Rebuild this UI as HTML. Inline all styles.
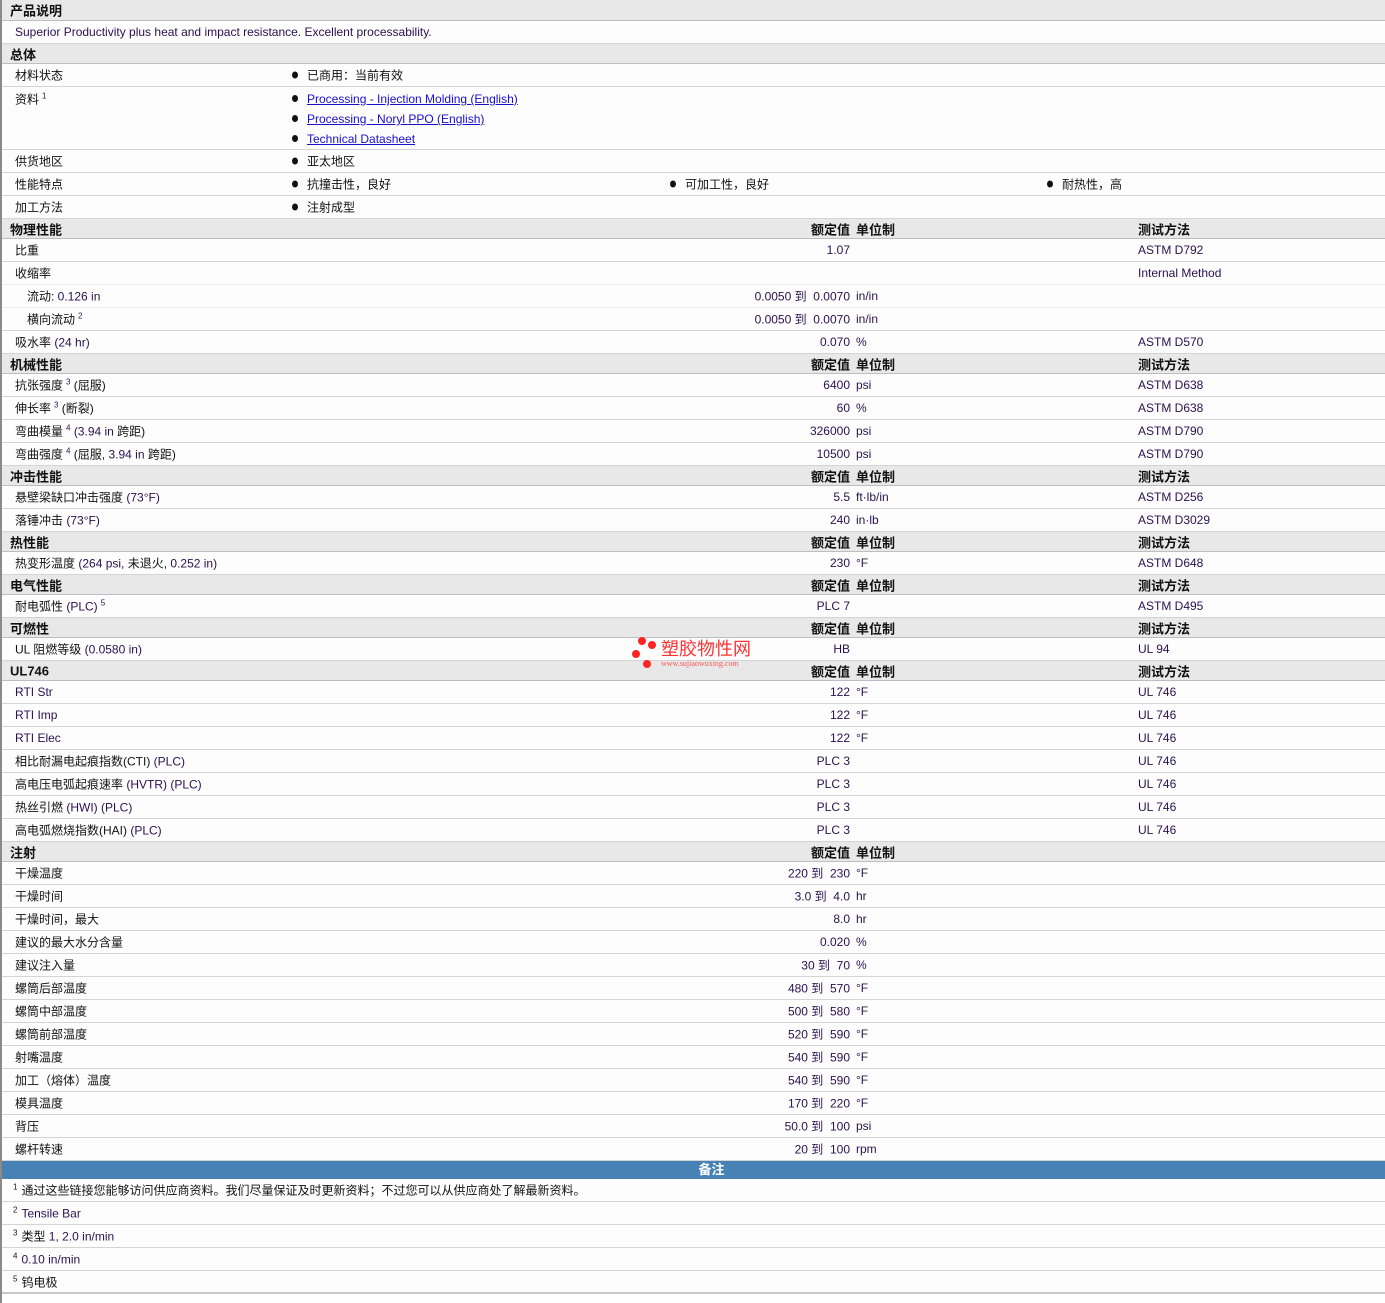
<!DOCTYPE html>
<html><head><meta charset="utf-8"><style>
*{box-sizing:border-box;margin:0;padding:0}
body{width:1385px;height:1303px;background:#fff;font-family:"Liberation Sans","Noto Sans CJK SC",sans-serif;font-size:12px;color:#111;position:relative;overflow:hidden;border-left:2px solid #8a8a8a}
.row{position:relative;height:23px;border-bottom:1px solid #d4d4d4;background:#fdfdfd}
.h{height:20px;background:#e8e8e8;border-bottom:1px solid #bdbdc8;font-weight:bold;font-size:13px}
.row span{position:absolute;top:50%;transform:translateY(-50%);white-space:nowrap}
.h .l{left:8px}
.l{left:13px}
.i{left:25px}
.v{right:535px;text-align:right;color:#2a1050}
.u{left:854px;color:#2a1050}
.t{left:1136px;color:#2a1050}
.hv{right:535px}
.hu{left:854px}
.ht{left:1136px}
.b{left:290px}
.b::before{content:"";display:inline-block;width:6px;height:7px;border-radius:50%;background:#111;margin-right:9px;vertical-align:1px}
.e{color:#2a1050}
sup{font-size:8px;vertical-align:5px;margin-left:3px}
a{color:#1a0dcc;text-decoration:underline}
.note{background:#4682b4;height:18px;color:#fff;font-weight:bold;font-size:13px;text-align:center;line-height:18px;padding-left:36px}
.nr sup{margin:0 4px 0 0}
</style></head><body>
<div class="row h" style="height:21px"><span class="l">产品说明</span></div>
<div class="row"><span class="l e">Superior Productivity plus heat and impact resistance. Excellent processability.</span></div>
<div class="row h"><span class="l">总体</span></div>
<div class="row"><span class="l">材料状态</span><span class="b">已商用：当前有效</span></div>
<div class="row" style="height:63px"><span class="l" style="top:12px">资料<sup class="e">1</sup></span>
<span class="b" style="top:12px"><a>Processing - Injection Molding (English)</a></span>
<span class="b" style="top:32px"><a>Processing - Noryl PPO (English)</a></span>
<span class="b" style="top:52px"><a>Technical Datasheet</a></span></div>
<div class="row"><span class="l">供货地区</span><span class="b">亚太地区</span></div>
<div class="row"><span class="l">性能特点</span><span class="b">抗撞击性，良好</span><span class="b" style="left:668px">可加工性，良好</span><span class="b" style="left:1045px">耐热性，高</span></div>
<div class="row"><span class="l">加工方法</span><span class="b">注射成型</span></div>
<div class="row h"><span class="l">物理性能</span><span class="hv">额定值</span><span class="hu">单位制</span><span class="ht">测试方法</span></div>
<div class="row"><span class="l">比重</span><span class="v">1.07</span><span class="t">ASTM D792</span></div>
<div class="row" style="border-color:#eee"><span class="l">收缩率</span><span class="t">Internal Method</span></div>
<div class="row" style="border-color:#eee"><span class="i">流动: <span class="e" style="position:static">0.126 in</span></span><span class="v">0.0050 到&nbsp; 0.0070</span><span class="u">in/in</span></div>
<div class="row"><span class="i">横向流动<sup class="e">2</sup></span><span class="v">0.0050 到&nbsp; 0.0070</span><span class="u">in/in</span></div>
<div class="row"><span class="l">吸水率 <span class="e" style="position:static">(24 hr)</span></span><span class="v">0.070</span><span class="u">%</span><span class="t">ASTM D570</span></div>
<div class="row h"><span class="l">机械性能</span><span class="hv">额定值</span><span class="hu">单位制</span><span class="ht">测试方法</span></div>
<div class="row"><span class="l">抗张强度<sup class="e">3</sup> (屈服)</span><span class="v">6400</span><span class="u">psi</span><span class="t">ASTM D638</span></div>
<div class="row"><span class="l">伸长率<sup class="e">3</sup> (断裂)</span><span class="v">60</span><span class="u">%</span><span class="t">ASTM D638</span></div>
<div class="row"><span class="l">弯曲模量<sup class="e">4</sup> <span class="e" style="position:static">(3.94 in</span> 跨距)</span><span class="v">326000</span><span class="u">psi</span><span class="t">ASTM D790</span></div>
<div class="row"><span class="l">弯曲强度<sup class="e">4</sup> (屈服, <span class="e" style="position:static">3.94 in</span> 跨距)</span><span class="v">10500</span><span class="u">psi</span><span class="t">ASTM D790</span></div>
<div class="row h"><span class="l">冲击性能</span><span class="hv">额定值</span><span class="hu">单位制</span><span class="ht">测试方法</span></div>
<div class="row"><span class="l">悬壁梁缺口冲击强度 <span class="e" style="position:static">(73°F)</span></span><span class="v">5.5</span><span class="u">ft·lb/in</span><span class="t">ASTM D256</span></div>
<div class="row"><span class="l">落锤冲击 <span class="e" style="position:static">(73°F)</span></span><span class="v">240</span><span class="u">in·lb</span><span class="t">ASTM D3029</span></div>
<div class="row h"><span class="l">热性能</span><span class="hv">额定值</span><span class="hu">单位制</span><span class="ht">测试方法</span></div>
<div class="row"><span class="l">热变形温度 <span class="e" style="position:static">(264 psi,</span> 未退火, <span class="e" style="position:static">0.252 in)</span></span><span class="v">230</span><span class="u">°F</span><span class="t">ASTM D648</span></div>
<div class="row h"><span class="l">电气性能</span><span class="hv">额定值</span><span class="hu">单位制</span><span class="ht">测试方法</span></div>
<div class="row"><span class="l">耐电弧性 <span class="e" style="position:static">(PLC)</span><sup class="e">5</sup></span><span class="v">PLC 7</span><span class="t">ASTM D495</span></div>
<div class="row h"><span class="l">可燃性</span><span class="hv">额定值</span><span class="hu">单位制</span><span class="ht">测试方法</span></div>
<div class="row"><span class="l">UL 阻燃等级 <span class="e" style="position:static">(0.0580 in)</span></span><span class="v">HB</span><span class="t">UL 94</span></div>
<div class="row h"><span class="l">UL746</span><span class="hv">额定值</span><span class="hu">单位制</span><span class="ht">测试方法</span></div>
<div class="row"><span class="l e">RTI Str</span><span class="v">122</span><span class="u">°F</span><span class="t">UL 746</span></div>
<div class="row"><span class="l e">RTI Imp</span><span class="v">122</span><span class="u">°F</span><span class="t">UL 746</span></div>
<div class="row"><span class="l e">RTI Elec</span><span class="v">122</span><span class="u">°F</span><span class="t">UL 746</span></div>
<div class="row"><span class="l">相比耐漏电起痕指数(CTI) <span class="e" style="position:static">(PLC)</span></span><span class="v">PLC 3</span><span class="t">UL 746</span></div>
<div class="row"><span class="l">高电压电弧起痕速率 <span class="e" style="position:static">(HVTR) (PLC)</span></span><span class="v">PLC 3</span><span class="t">UL 746</span></div>
<div class="row"><span class="l">热丝引燃 <span class="e" style="position:static">(HWI) (PLC)</span></span><span class="v">PLC 3</span><span class="t">UL 746</span></div>
<div class="row"><span class="l">高电弧燃烧指数(HAI) <span class="e" style="position:static">(PLC)</span></span><span class="v">PLC 3</span><span class="t">UL 746</span></div>
<div class="row h"><span class="l">注射</span><span class="hv">额定值</span><span class="hu">单位制</span></div>
<div class="row"><span class="l">干燥温度</span><span class="v">220 到&nbsp; 230</span><span class="u">°F</span></div>
<div class="row"><span class="l">干燥时间</span><span class="v">3.0 到&nbsp; 4.0</span><span class="u">hr</span></div>
<div class="row"><span class="l">干燥时间，最大</span><span class="v">8.0</span><span class="u">hr</span></div>
<div class="row"><span class="l">建议的最大水分含量</span><span class="v">0.020</span><span class="u">%</span></div>
<div class="row"><span class="l">建议注入量</span><span class="v">30 到&nbsp; 70</span><span class="u">%</span></div>
<div class="row"><span class="l">螺筒后部温度</span><span class="v">480 到&nbsp; 570</span><span class="u">°F</span></div>
<div class="row"><span class="l">螺筒中部温度</span><span class="v">500 到&nbsp; 580</span><span class="u">°F</span></div>
<div class="row"><span class="l">螺筒前部温度</span><span class="v">520 到&nbsp; 590</span><span class="u">°F</span></div>
<div class="row"><span class="l">射嘴温度</span><span class="v">540 到&nbsp; 590</span><span class="u">°F</span></div>
<div class="row"><span class="l">加工（熔体）温度</span><span class="v">540 到&nbsp; 590</span><span class="u">°F</span></div>
<div class="row"><span class="l">模具温度</span><span class="v">170 到&nbsp; 220</span><span class="u">°F</span></div>
<div class="row"><span class="l">背压</span><span class="v">50.0 到&nbsp; 100</span><span class="u">psi</span></div>
<div class="row"><span class="l">螺杆转速</span><span class="v">20 到&nbsp; 100</span><span class="u">rpm</span></div>
<div class="note">备注</div>
<div class="row nr"><span class="l" style="left:11px"><sup>1</sup>通过这些链接您能够访问供应商资料。我们尽量保证及时更新资料；不过您可以从供应商处了解最新资料。</span></div>
<div class="row nr"><span class="l" style="left:11px"><sup>2</sup><span class="e" style="position:static">Tensile Bar</span></span></div>
<div class="row nr"><span class="l" style="left:11px"><sup>3</sup>类型 <span class="e" style="position:static">1, 2.0 in/min</span></span></div>
<div class="row nr"><span class="l" style="left:11px"><sup>4</sup><span class="e" style="position:static">0.10 in/min</span></span></div>
<div class="row nr" style="border-bottom:2px solid #c8c8c8"><span class="l" style="left:11px"><sup>5</sup>钨电极</span></div>
<div style="position:absolute;left:630px;top:636px;width:130px;height:36px">
<div style="position:absolute;left:6px;top:1px;width:8px;height:8px;border-radius:50%;background:#f22"></div>
<div style="position:absolute;left:16px;top:5px;width:8px;height:8px;border-radius:50%;background:#f22"></div>
<div style="position:absolute;left:0;top:14px;width:8px;height:8px;border-radius:50%;background:#f22"></div>
<div style="position:absolute;left:11px;top:24px;width:8px;height:8px;border-radius:50%;background:#f22"></div>
<div style="position:absolute;left:29px;top:3px;color:#f33;font-size:18px;line-height:20px">塑胶物性网</div>
<div style="position:absolute;left:29px;top:23px;color:#f55;font-size:8px;font-family:'Liberation Serif',serif">www.sujiaowuxing.com</div>
</div>
</body></html>
